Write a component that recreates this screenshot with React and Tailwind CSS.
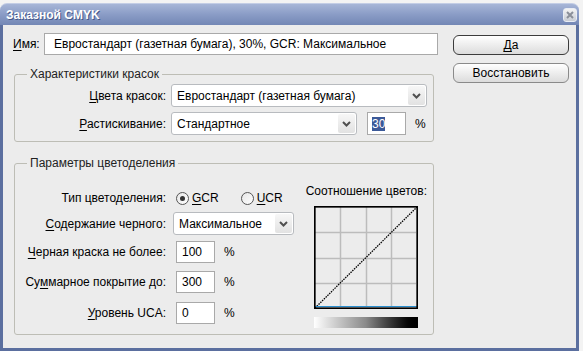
import React from "react";

const U = ({ children }) => <span className="underline underline-offset-[2px]">{children}</span>;

const Arrow = () => (
  <span className="mr-px flex h-[19px] w-[17px] items-center justify-center rounded-[2px] bg-gradient-to-b from-[#f7f7f7] to-[#e2e2e2]">
    <svg width="9" height="6" viewBox="0 0 9 6">
      <path d="M1 1l3.5 3.5L8 1" stroke="#505050" strokeWidth="2" fill="none" />
    </svg>
  </span>
);

const Select = ({ value, w }) => (
  <div className={"flex h-[23px] items-center rounded-[3px] border border-[#b8bbbf] bg-white pl-[5px] " + w}>
    <span className="flex-1 truncate">{value}</span>
    <Arrow />
  </div>
);

const Field = ({ children }) => (
  <div className="flex h-[22px] w-[39px] items-center border border-[#a9a9a9] bg-white pl-[5px]">{children}</div>
);

const Radio = ({ checked, children }) => (
  <label className="flex items-center gap-[3px]">
    <span className="flex h-[13px] w-[13px] items-center justify-center rounded-full border border-[#555] bg-gradient-to-br from-[#e6e6e6] to-white">
      {checked && <span className="h-[5px] w-[5px] rounded-full bg-[#333]" />}
    </span>
    <span>{children}</span>
  </label>
);

const Chart = () => (
  <svg width="104" height="103" viewBox="0 0 104 103">
    <rect x="0" y="0" width="104" height="103" fill="#ececec" />
    {[26, 52, 77].map((v) => (
      <g key={v}>
        <line x1={v + 0.5} y1="1" x2={v + 0.5} y2="101" stroke="#bcbcbc" strokeWidth="1.5" />
        <line x1="1" y1={v + 0.5} x2="102" y2={v + 0.5} stroke="#bcbcbc" strokeWidth="1.5" />
      </g>
    ))}
    <line x1="1" y1="102" x2="103" y2="1" stroke="#000" strokeWidth="1.3" strokeDasharray="1.5 1" />
    <line x1="1" y1="100.5" x2="103" y2="100.5" stroke="#2a8fd0" strokeWidth="1.2" />
    <rect x="0.75" y="0.75" width="102.5" height="101.5" fill="none" stroke="#000" strokeWidth="1.8" />
  </svg>
);

export default function App() {
  return (
    <div className="h-[351px] w-[583px] overflow-hidden bg-[#f3f3f3] pt-[3px] font-['Liberation_Sans',Arial,sans-serif] text-[12px] leading-[14px] text-black">
      <div className="flex h-[348px] w-[579px] flex-col">
        {/* title bar */}
        <div className="flex h-[22px] items-center justify-between rounded-t-[7px] border-t border-[#c3cde5] bg-gradient-to-b from-[#a7b6d7] via-[#8a9cc6] to-[#7387b5] pl-[6px] pr-[2px]">
          <span className="font-bold text-white [text-shadow:1px_1px_0_#46588a]">Заказной CMYK</span>
          <span className="flex h-[14px] w-[14px] items-center justify-center rounded-[3px] border border-[#e8ecf4] bg-gradient-to-b from-[#f4f4f4] to-[#c8ccd4]">
            <svg width="8" height="8" viewBox="0 0 8 8">
              <path d="M1 1l6 6M7 1l-6 6" stroke="#8a8f99" strokeWidth="2" />
            </svg>
          </span>
        </div>

        <div className="flex flex-1 border-x-[3px] border-b-[3px] border-[#5b6f9f] bg-[#ececec]">
          <div className="flex w-[440px] flex-col pl-[10px] pt-[8px]">
            <div className="flex items-center">
              <span className="w-[31px]">
                <U>И</U>мя:
              </span>
              <div className="flex h-[22px] w-[394px] items-center border border-[#a9a9a9] bg-white pl-[9px]">
                Евростандарт (газетная бумага), 30%, GCR: Максимальное
              </div>
            </div>

            <fieldset className="ml-px mt-[12px] w-[420px] rounded-[3px] border border-[#bdbdb5] pb-[6px]">
              <legend className="ml-[12px] px-[3px] text-[#222]">Характеристики красок</legend>
              <div className="mt-[3px] flex items-center gap-[5px]">
                <span className="w-[151px] text-right">
                  <U>Ц</U>вета красок:
                </span>
                <Select value="Евростандарт (газетная бумага)" w="w-[256px]" />
              </div>
              <div className="mt-[5px] flex items-center gap-[5px]">
                <span className="w-[151px] text-right">
                  <U>Р</U>астискивание:
                </span>
                <Select value="Стандартное" w="w-[186px]" />
                <div className="ml-[5px] flex h-[23px] w-[39px] items-center border border-[#a9a9a9] bg-white pl-[4px]">
                  <span className="bg-[#3b5998] text-white">30</span>
                </div>
                <span className="ml-[4px]">%</span>
              </div>
            </fieldset>

            <fieldset className="ml-px mt-[14px] w-[420px] rounded-[3px] border border-[#bdbdb5] pb-[6px]">
              <legend className="ml-[12px] px-[3px] text-[#222]">Параметры цветоделения</legend>
              <div className="flex">
                <div className="flex w-[288px] flex-col">
                  <div className="mt-[21px] flex items-center">
                    <span className="w-[151px] text-right">Тип цветоделения:</span>
                    <div className="ml-[10px] flex items-center gap-[22px]">
                      <Radio checked>
                        <U>G</U>CR
                      </Radio>
                      <Radio>
                        <U>U</U>CR
                      </Radio>
                    </div>
                  </div>
                  <div className="mt-[7px] flex items-center">
                    <span className="w-[151px] text-right">
                      <U>С</U>одержание черного:
                    </span>
                    <div className="ml-[7px]">
                      <Select value="Максимальное" w="w-[121px]" />
                    </div>
                  </div>
                  {[
                    [<><U>Ч</U>ерная краска не более:</>, "100", "mt-[6px]"],
                    [<>Су<U>м</U>марное покрытие до:</>, "300", "mt-[8px]"],
                    [<><U>У</U>ровень UCA:</>, "0", "mt-[9px]"],
                  ].map(([label, val, mt], i) => (
                    <div key={i} className={"flex items-center " + mt}>
                      <span className="w-[151px] text-right">{label}</span>
                      <div className="ml-[10px]">
                        <Field>{val}</Field>
                      </div>
                      <span className="ml-[9px]">%</span>
                    </div>
                  ))}
                </div>
                <div className="flex w-[124px] flex-col items-end">
                  <span className="mt-[14px]">Соотношение цветов:</span>
                  <div className="mr-[9px] mt-[8px]">
                    <Chart />
                  </div>
                  <div className="mr-[9px] mt-[8px] h-[11px] w-[104px] bg-gradient-to-r from-white via-[#8a8a8a] to-black" />
                </div>
              </div>
            </fieldset>
          </div>

          <div className="flex flex-col gap-[8px] pl-[10px] pt-[10px]">
            <button className="h-[20px] w-[116px] rounded-[6px] border border-[#3c3c3c] bg-gradient-to-b from-white to-[#dcdcdc]">
              <U>Д</U>а
            </button>
            <button className="h-[20px] w-[116px] rounded-[6px] border border-[#8a8a8a] bg-gradient-to-b from-white to-[#dcdcdc]">
              Восстановить
            </button>
          </div>
        </div>
      </div>
    </div>
  );
}
